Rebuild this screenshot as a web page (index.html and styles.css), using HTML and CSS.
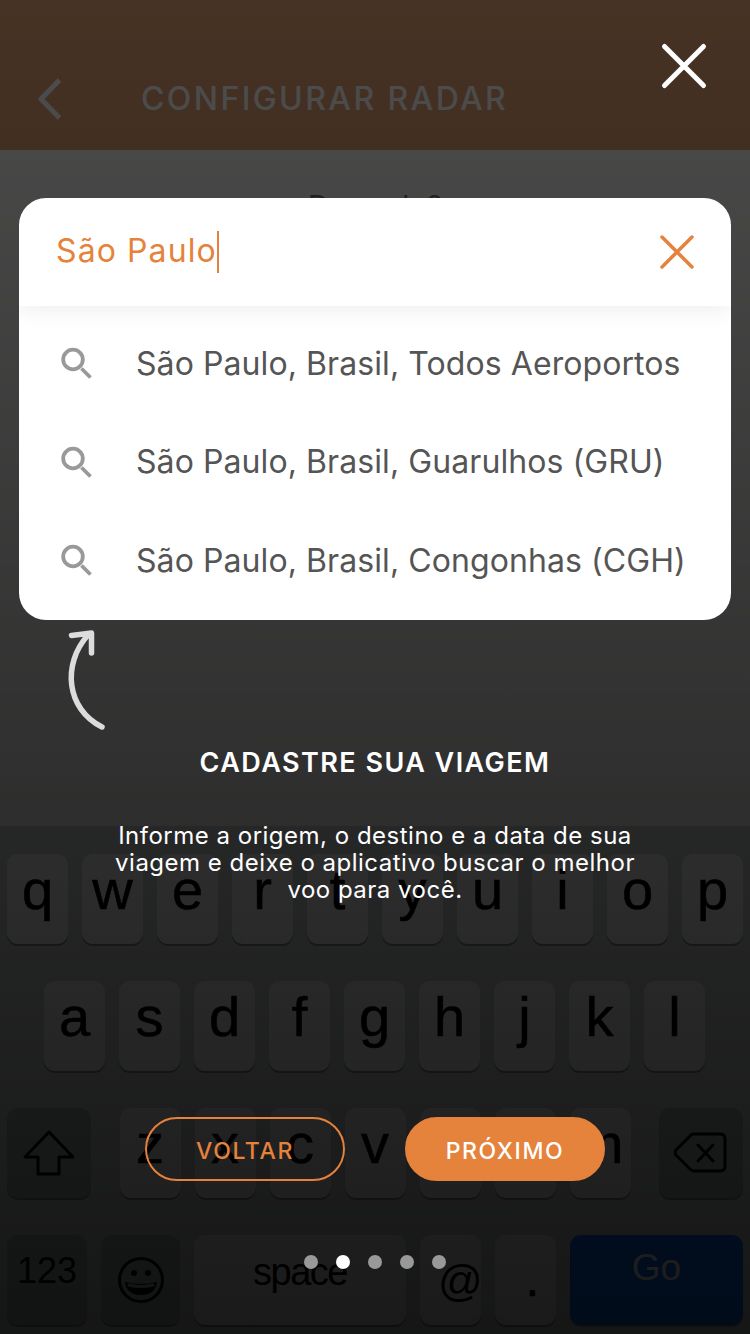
FILE: index.html
```html
<!DOCTYPE html>
<html lang="pt-BR">
<head>
    <meta charset="UTF-8">
    <meta name="viewport" content="width=device-width, initial-scale=1.0">
    <title>Configurar Radar</title>
    <link rel="stylesheet" href="styles.css">
</head>
<body>
    <div class="screen">
        <header class="navbar">
            <svg class="back" width="24" height="42" viewBox="0 0 24 42"><path d="M21.500 2 3 21l18.500 19"/></svg>
            <h1>CONFIGURAR RADAR</h1>
        </header>
        <main class="form">
            <label>De onde?</label>
        </main>
        <div class="keyboard">
            <div class="row">
                <span class="key">q</span><span class="key">w</span><span class="key">e</span><span class="key">r</span><span class="key">t</span><span class="key">y</span><span class="key">u</span><span class="key">i</span><span class="key">o</span><span class="key">p</span>
            </div>
            <div class="row row-middle">
                <span class="key">a</span><span class="key">s</span><span class="key">d</span><span class="key">f</span><span class="key">g</span><span class="key">h</span><span class="key">j</span><span class="key">k</span><span class="key">l</span>
            </div>
            <div class="row row-shift">
                <span class="key dark wide">
                    <svg width="54" height="48" viewBox="0 0 54 48"><path d="M27 3 3 28h13v17h21V28h14z"/></svg>
                </span>
                <div class="letters">
                    <span class="key">z</span><span class="key">x</span><span class="key">c</span><span class="key">v</span><span class="key">b</span><span class="key">n</span><span class="key">m</span>
                </div>
                <span class="key dark wide">
                    <svg width="54" height="42" viewBox="0 0 54 42"><path d="M20 2h26q5 0 5 5v27q0 5-5 5H20q-2 0-4-2L2 23q-2-2.500 0-5L16 4q2-2 4-2zM24 13l15 16M39 13 24 29"/></svg>
                </span>
            </div>
            <div class="row row-bottom">
                <span class="key dark numbers">123</span>
                <span class="key dark emoji">
                    <svg width="48" height="48" viewBox="0 0 48 48">
                        <circle cx="24" cy="24" r="21.500"/>
                        <circle class="fill" cx="17" cy="17" r="3"/>
                        <circle class="fill" cx="31" cy="17" r="3"/>
                        <path class="fill" d="M8 26q16 4 32 0-2 13-16 13T8 26z"/>
                        <path class="teeth" d="M12 29q12 3 24 0"/>
                    </svg>
                </span>
                <span class="key space">space</span>
                <span class="key at">@</span>
                <span class="key dot">.</span>
                <span class="key go">Go</span>
            </div>
        </div>

        <!-- Tutorial overlay -->
        <div class="overlay">
            <div class="overlay-top">
                <svg class="close" width="48" height="48" viewBox="0 0 48 48"><path d="M4.500 4.500l39 39M43.500 4.500l-39 39"/></svg>
            </div>
            <section class="search-card">
                <div class="search-input">
                    <span class="typed">São Paulo</span><span class="caret"></span>
                    <svg class="clear" width="36" height="36" viewBox="0 0 36 36"><path d="M3 3l30 30M33 3 3 33"/></svg>
                </div>
                <ul class="results">
                    <li>
                        <svg width="32" height="32" viewBox="0 0 32 32"><circle cx="12" cy="12.500" r="9.800"/><path d="M20.500 21.500l9 9"/></svg>
                        <span>São Paulo, Brasil, Todos Aeroportos</span>
                    </li>
                    <li>
                        <svg width="32" height="32" viewBox="0 0 32 32"><circle cx="12" cy="12.500" r="9.800"/><path d="M20.500 21.500l9 9"/></svg>
                        <span>São Paulo, Brasil, Guarulhos (GRU)</span>
                    </li>
                    <li>
                        <svg width="32" height="32" viewBox="0 0 32 32"><circle cx="12" cy="12.500" r="9.800"/><path d="M20.500 21.500l9 9"/></svg>
                        <span>São Paulo, Brasil, Congonhas (CGH)</span>
                    </li>
                </ul>
            </section>
            <svg class="arrow" width="40" height="102" viewBox="0 0 40 102"><path d="M35 98C-1 80-5 35 21 6M4.500 6.500 24.500 4v20"/></svg>
            <h2>CADASTRE SUA VIAGEM</h2>
            <p class="description">Informe a origem, o destino e a data de sua<br>viagem e deixe o aplicativo buscar o melhor<br>voo para você.</p>
            <div class="actions">
                <button class="button outline">VOLTAR</button>
                <button class="button primary">PRÓXIMO</button>
            </div>
            <div class="pages">
                <i></i><i class="active"></i><i></i><i></i><i></i>
            </div>
        </div>
    </div>
</body>
</html>
```
FILE: styles.css
```css
* {
    box-sizing: border-box;
}

body {
    margin: 0;
    font-family: Inter, "Open Sans", sans-serif;
}

svg {
    display: block;
    flex: none;
    fill: none;
    stroke-linecap: round;
    stroke-linejoin: round;
}

.screen {
    position: relative;
    display: flex;
    flex-direction: column;
    width: 750px;
    height: 1334px;
    overflow: hidden;
    background-color: #fafaf8;
}

/* Screen behind the tutorial */
.navbar {
    display: flex;
    align-items: center;
    height: 150px;
    padding: 48px 0 0 38px;
    background-color: #e3a373;
}

.back {
    stroke: #fff;
    stroke-width: 5;
    stroke-linecap: butt;
}

.navbar h1 {
    margin: 0 0 0 79px;
    font-size: 32px;
    line-height: 40px;
    font-weight: 500;
    color: #fff;
    letter-spacing: 2.4px;
}

.form {
    flex: 1;
    padding-top: 38px;
    text-align: center;
}

.form label {
    font-size: 30px;
    line-height: 36px;
    color: #777;
}

/* Keyboard */
.keyboard {
    display: flex;
    flex-direction: column;
    gap: 37px;
    height: 508px;
    padding: 28px 7px 0;
    background-color: #d1d5d8;
    font-family: "Liberation Sans", Arial, sans-serif;
}

.row,
.letters {
    display: flex;
    gap: 14px;
}

.row-middle {
    padding-left: 37px;
}

.row-shift {
    justify-content: space-between;
}

.key {
    flex: none;
    width: 61px;
    height: 90px;
    border-radius: 11px;
    background-color: #fcfcfc;
    box-shadow: 0 2px 0 #888b90;
    font-size: 56px;
    line-height: 71px;
    text-align: center;
    color: #000;
    -webkit-text-stroke: 0.6px #000;
}

.key.dark {
    background-color: #a9b4b4;
}

.key svg {
    margin: 0 auto;
    stroke: #000;
    stroke-width: 3;
}

.key.wide {
    display: flex;
    align-items: center;
    width: 84px;
}

.key.numbers {
    width: 80px;
    font-size: 36px;
    line-height: 71px;
    -webkit-text-stroke: 0;
}

.key.emoji {
    display: flex;
    align-items: center;
    width: 79px;
}

.key .fill {
    fill: #000;
    stroke: none;
}

.key .teeth {
    stroke: #a9b4b4;
    stroke-width: 3;
}

.key.space {
    width: 212px;
    font-size: 38px;
    line-height: 75px;
    letter-spacing: -1.5px;
    -webkit-text-stroke: 0;
}

.key.at {
    padding-left: 18px;
    font-size: 44px;
    line-height: 91px;
    -webkit-text-stroke: 0;
}

.key.dot {
    padding-left: 14px;
    font-size: 50px;
    line-height: 88px;
}

.key.go {
    flex: 1;
    background-color: #0772ff;
    font-size: 37px;
    line-height: 66px;
    color: #fff;
    -webkit-text-stroke: 0;
}

/* Tutorial overlay */
.overlay {
    position: absolute;
    inset: 0;
    display: flex;
    flex-direction: column;
    align-items: center;
    background: linear-gradient(rgba(0, 0, 0, 0.69), rgba(0, 0, 0, 0.898));
}

.overlay-top {
    display: flex;
    justify-content: flex-end;
    align-self: stretch;
    height: 198px;
    padding: 42px 42px 0 0;
}

.close {
    stroke: #fff;
    stroke-width: 5;
}

.search-card {
    width: 712px;
    height: 422px;
    border-radius: 27px;
    background-color: #fff;
    overflow: hidden;
}

.search-input {
    display: flex;
    align-items: center;
    height: 108px;
    padding: 0 36px 0 37px;
    box-shadow: 0 4px 22px rgba(0, 0, 0, 0.07);
    color: #e5823b;
    font-size: 32px;
}

.typed {
    margin-top: -3px;
    letter-spacing: 1.1px;
}

.caret {
    width: 2px;
    height: 42px;
    background-color: #e5823b;
}

.clear {
    margin-left: auto;
    stroke: #e5823b;
    stroke-width: 3.5;
}

.results {
    margin: 0;
    padding: 8px 0 0 42px;
    list-style: none;
}

.results li {
    display: flex;
    align-items: center;
    gap: 43px;
    height: 98.5px;
    font-size: 32px;
    color: #555;
    letter-spacing: 0.08px;
    white-space: nowrap;
}

.results svg {
    stroke: #999;
    stroke-width: 3.8;
    stroke-linecap: butt;
}

.arrow {
    align-self: flex-start;
    margin: 9px 0 0 67px;
    stroke: #dcdcdc;
    stroke-width: 5.5;
}

.overlay h2 {
    margin: 14px 0 0;
    font-size: 27px;
    line-height: 36px;
    font-weight: 600;
    color: #fff;
    letter-spacing: 1.45px;
}

.description {
    margin: 41px 0 0;
    font-size: 24px;
    line-height: 27px;
    color: #fff;
    letter-spacing: 0.5px;
    text-align: center;
    white-space: nowrap;
}

.actions {
    display: flex;
    gap: 60px;
    margin-top: 214px;
}

.button {
    width: 200px;
    height: 64px;
    padding: 3px 0 0;
    border: 2px solid #e5823b;
    border-radius: 32px;
    font-family: inherit;
    font-size: 23px;
    font-weight: 500;
    letter-spacing: 1.6px;
}

.outline {
    background: none;
    color: #e5823b;
}

.primary {
    background-color: #e5823b;
    color: #fff;
}

.pages {
    display: flex;
    gap: 18px;
    margin-top: 74px;
}

.pages i {
    width: 14px;
    height: 14px;
    border-radius: 50%;
    background-color: #999;
}

.pages .active {
    background-color: #fff;
}
```
